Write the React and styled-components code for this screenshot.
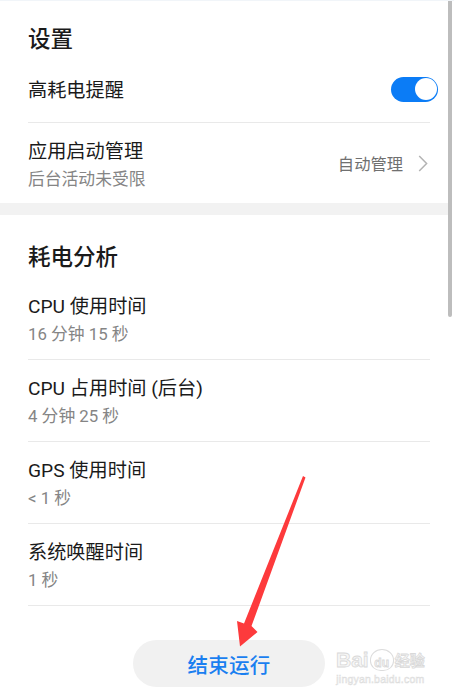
import React from "react"
import styled, { createGlobalStyle } from "styled-components"

const GlobalStyle = createGlobalStyle`
  html, body {
    margin: 0;
    padding: 0;
    background: #fff;
  }
  body {
    font-family: Roboto, "Noto Sans CJK SC", sans-serif;
    -webkit-font-smoothing: antialiased;
  }
`

const usage = [
  { title: "CPU 使用时间", value: "16 分钟 15 秒" },
  { title: "CPU 占用时间 (后台)", value: "4 分钟 25 秒" },
  { title: "GPS 使用时间", value: "< 1 秒" },
  { title: "系统唤醒时间", value: "1 秒" },
]

const App = () => {
  return (
    <Page>
      <GlobalStyle />
      <Content>
        <Section>
          <SectionTitle $top={14} $height={46}>设置</SectionTitle>
          <ToggleRow>
            <RowTitle>高耗电提醒</RowTitle>
            <Switch $on>
              <Knob />
            </Switch>
          </ToggleRow>
          <LinkRow>
            <TextBlock>
              <RowTitle>应用启动管理</RowTitle>
              <RowSub>后台活动未受限</RowSub>
            </TextBlock>
            <LinkValue>
              自动管理
              <Chevron width="10" height="17" viewBox="0 0 10 17">
                <path d="M1.2 1 L8.6 8.5 L1.2 16" />
              </Chevron>
            </LinkValue>
          </LinkRow>
        </Section>
        <Band />
        <Section>
          <SectionTitle $top={17} $height={46}>耗电分析</SectionTitle>
          {usage.map((u) => (
            <InfoRow key={u.title}>
              <RowTitle>{u.title}</RowTitle>
              <RowSub>{u.value}</RowSub>
            </InfoRow>
          ))}
        </Section>
        <ButtonBar>
          <StopButton>结束运行</StopButton>
        </ButtonBar>
      </Content>
      <ScrollTrack>
        <ScrollThumb />
      </ScrollTrack>

      <Arrow width="454" height="693" viewBox="0 0 454 693">
        <polygon points="303,476 305.5,477.5 251.5,626 257.5,632 240,646.5 237,621 244,623.5" />
      </Arrow>

      <Watermark>
        <MarkLine>
          <span>Bai</span>
          <Paw>du</Paw>
          <MarkCjk>经验</MarkCjk>
        </MarkLine>
        <MarkUrl>jingyan.baidu.com</MarkUrl>
      </Watermark>
    </Page>
  )
}

export default App

const Page = styled.div`
  position: relative;
  display: flex;
  width: 454px;
  height: 693px;
  overflow: hidden;
  background: #fff;
  border-top: 1px solid #f1f5f9;
  box-sizing: border-box;
`

const Content = styled.div`
  flex: 1;
  display: flex;
  flex-direction: column;
  margin-top: -1px;
`

const Section = styled.div`
  padding: 0 18px 0 28px;
`

const SectionTitle = styled.div`
  margin-top: ${(p) => p.$top}px;
  height: ${(p) => p.$height}px;
  display: flex;
  align-items: center;
  font-size: 22.5px;
  font-weight: 500;
  color: #1a1a1a;
  font-family: "Noto Sans CJK SC", sans-serif;
`

const RowTitle = styled.div`
  font-size: 19.2px;
  line-height: 26px;
  color: #1a1a1a;
  white-space: nowrap;
`

const RowSub = styled.div`
  margin-top: 3px;
  font-size: 16.8px;
  line-height: 22px;
  color: #858585;
  white-space: nowrap;
`

const ToggleRow = styled.div`
  height: 62px;
  display: flex;
  align-items: center;
  justify-content: space-between;
  border-bottom: 1px solid #e9e9e9;

  & > ${RowTitle} {
    margin-top: -1px;
  }
`

const Switch = styled.div`
  width: 47px;
  height: 25px;
  margin-right: -8px;
  margin-top: -4px;
  border-radius: 13px;
  background: ${(p) => (p.$on ? "#0b7cf6" : "#d5d5d5")};
  display: flex;
  justify-content: ${(p) => (p.$on ? "flex-end" : "flex-start")};
  align-items: center;
  padding: 0 1.5px;
  box-sizing: border-box;
`

const Knob = styled.div`
  width: 22px;
  height: 22px;
  border-radius: 50%;
  background: #fff;
`

const LinkRow = styled.div`
  display: flex;
  align-items: center;
  justify-content: space-between;
  height: 80px;
`

const TextBlock = styled.div`
  display: flex;
  flex-direction: column;
  padding-top: 3px;
`

const LinkValue = styled.div`
  display: flex;
  align-items: center;
  gap: 15px;
  font-size: 16.3px;
  color: #707070;
  margin-right: 2px;
`

const Chevron = styled.svg`
  fill: none;
  stroke: #b3b3b3;
  stroke-width: 1.5;
`

const Band = styled.div`
  height: 12px;
  background: #f2f2f2;
`

const InfoRow = styled.div`
  padding: 16px 0 14px;
  border-bottom: 1px solid #e9e9e9;
`

const ButtonBar = styled.div`
  display: flex;
  justify-content: center;
  padding-left: 10px;
  margin-top: 34px;
`

const StopButton = styled.button`
  width: 192px;
  height: 47px;
  border: 0;
  border-radius: 24px;
  background: #f1f1f1;
  color: #1a7ff0;
  font-family: "Noto Sans CJK SC", sans-serif;
  font-size: 20.5px;
  font-weight: 500;
  letter-spacing: 0.3px;
  padding: 0;
`

const ScrollTrack = styled.div`
  width: 6px;
  margin-top: -1px;
`

const ScrollThumb = styled.div`
  width: 4px;
  height: 317px;
  background: #bdbdbd;
  border-radius: 0 0 2px 2px;
`

const Arrow = styled.svg`
  position: absolute;
  left: 0;
  top: -1px;
  pointer-events: none;
  fill: #fd3a3c;
`

const Watermark = styled.div`
  position: absolute;
  left: 336px;
  top: 646px;
  display: flex;
  flex-direction: column;
  align-items: center;
  white-space: nowrap;
  color: #f6f6f6;
  -webkit-text-stroke: 0.8px #d9d9d9;
  pointer-events: none;
`

const MarkLine = styled.div`
  display: flex;
  align-items: center;
  white-space: nowrap;
  font-family: "Liberation Sans", sans-serif;
  font-weight: 700;
  font-size: 21px;
  line-height: 26px;
`

const MarkCjk = styled.span`
  font-family: "Noto Sans CJK SC", sans-serif;
  font-size: 15px;
`

const Paw = styled.span`
  flex-shrink: 0;
  font-size: 12px;
  width: 22px;
  height: 20px;
  margin: 0 1px;
  display: flex;
  align-items: flex-end;
  justify-content: center;
  border-radius: 50% 50% 45% 45%;
  border: 1px solid #dcdcdc;
  line-height: 14px;
`

const MarkUrl = styled.div`
  font-family: "Liberation Sans", sans-serif;
  font-size: 10.5px;
  line-height: 12px;
  -webkit-text-stroke: 0.5px #dcdcdc;
  letter-spacing: 0.2px;
`
